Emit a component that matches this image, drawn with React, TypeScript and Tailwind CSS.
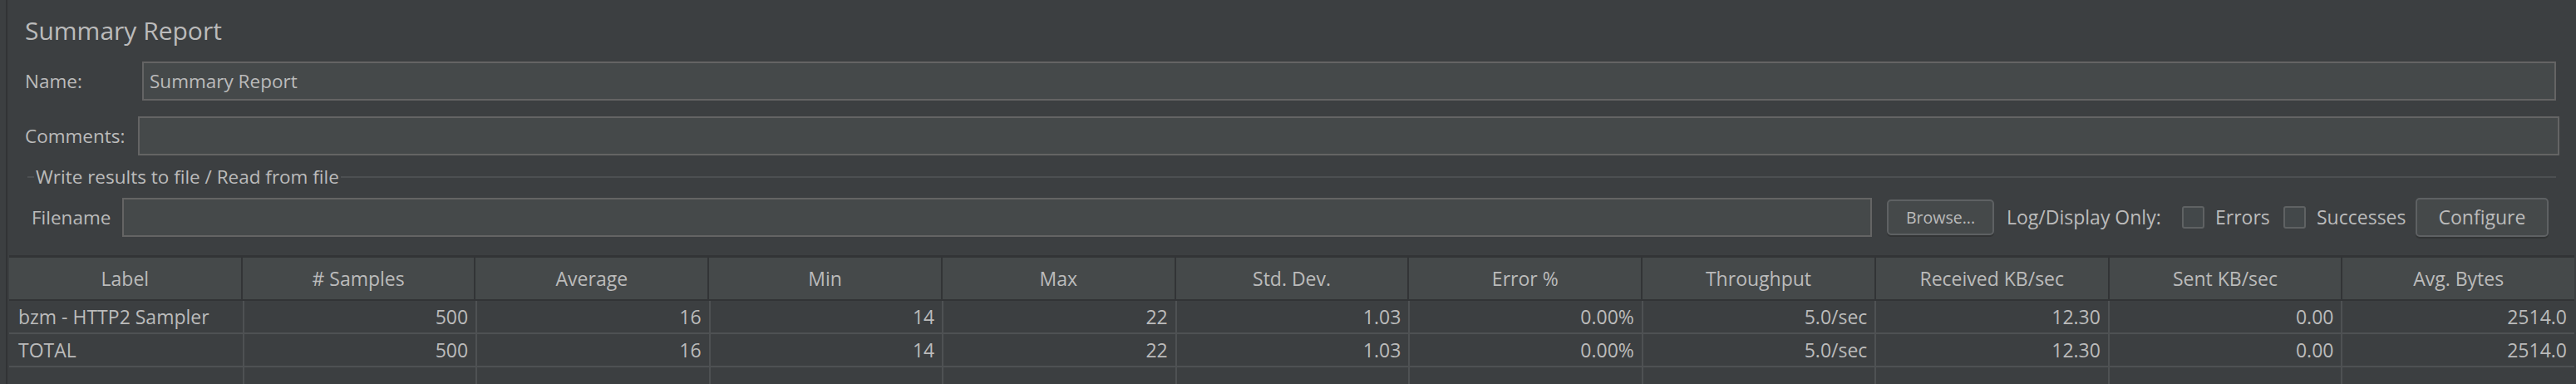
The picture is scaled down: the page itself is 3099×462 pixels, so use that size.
import React from "react";

const headers = [
  "Label",
  "# Samples",
  "Average",
  "Min",
  "Max",
  "Std. Dev.",
  "Error %",
  "Throughput",
  "Received KB/sec",
  "Sent KB/sec",
  "Avg. Bytes",
];

const rows = [
  ["bzm - HTTP2 Sampler", "500", "16", "14", "22", "1.03", "0.00%", "5.0/sec", "12.30", "0.00", "2514.0"],
  ["TOTAL", "500", "16", "14", "22", "1.03", "0.00%", "5.0/sec", "12.30", "0.00", "2514.0"],
  ["", "", "", "", "", "", "", "", "", "", ""],
];

function Checkbox() {
  return <div className="w-[27px] h-[27px] shrink-0 rounded-[3px] border-2 border-[#5f6263] bg-[#43484a]" />;
}

export default function App() {
  return (
    <div className="w-[3099px] h-[462px] overflow-hidden bg-[#3c3f41] text-[#bbbbbb] flex font-['Open_Sans',sans-serif]">
      <div className="w-[7px] shrink-0" />
      <div className="w-[2px] shrink-0 bg-[#313335]" />
      <div className="flex-1 flex flex-col min-w-0 overflow-hidden">
        {/* Title */}
        <div className="h-[74px] shrink-0 pl-[21px] pt-[17px]">
          <div className="text-[30px] leading-[40px]">Summary Report</div>
        </div>
        {/* Name */}
        <div className="h-[47px] shrink-0 flex items-stretch pr-[24px] text-[22.5px]">
          <div className="w-[162px] shrink-0 pl-[21px] flex items-center">Name:</div>
          <div className="flex-1 border-2 border-[#646464] bg-[#45494a] flex items-center pl-[7px]">
            Summary Report
          </div>
        </div>
        <div className="h-[19px] shrink-0" />
        {/* Comments */}
        <div className="h-[47px] shrink-0 flex items-stretch pr-[20px] text-[22.5px]">
          <div className="w-[157px] shrink-0 pl-[21px] flex items-center">Comments:</div>
          <div className="flex-1 border-2 border-[#646464] bg-[#45494a]" />
        </div>
        {/* Separator */}
        <div className="h-[51px] shrink-0 flex items-center pl-[24px] pr-[24px]">
          <div className="w-[8px] h-[2px] bg-[#4d5052]" />
          <div className="px-[2px] text-[22.5px] leading-[28px]">Write results to file / Read from file</div>
          <div className="flex-1 h-[2px] bg-[#4d5052]" />
        </div>
        {/* Filename row */}
        <div className="h-[47px] shrink-0 flex items-center pr-[33px] text-[22.5px]">
          <div className="w-[138px] shrink-0 pl-[29px]">Filename</div>
          <div className="flex-1 self-stretch border-2 border-[#646464] bg-[#45494a]" />
          <div className="ml-[18px] w-[129px] h-[43px] shrink-0 rounded-[5px] border-2 border-[#5e6163] bg-[#45494a] shadow-[0_2px_0_#323435] flex items-center justify-center text-[19.5px]">
            Browse...
          </div>
          <div className="ml-[15px] w-[188px] shrink-0 whitespace-nowrap text-[23px]">Log/Display Only:</div>
          <div className="ml-[23px]"><Checkbox /></div>
          <div className="ml-[13px] w-[58px] shrink-0 text-[23px]">Errors</div>
          <div className="ml-[24px]"><Checkbox /></div>
          <div className="ml-[13px] w-[105px] shrink-0 whitespace-nowrap text-[23px]">Successes</div>
          <div className="ml-[14px] w-[160px] h-[47px] shrink-0 rounded-[5px] border-2 border-[#5e6163] bg-[#45494a] shadow-[0_2px_0_#323435] flex items-center justify-center text-[23px]">
            Configure
          </div>
        </div>
        <div className="h-[22px] shrink-0" />
        {/* Table */}
        <div className="ml-[2px] mr-[2px] shrink-0 flex flex-col text-[23px]">
          <div className="h-[3px] bg-[#323436]" />
          <div className="h-[50px] flex bg-[#45494a]">
            {headers.map((h, i) => (
              <div
                key={h}
                className={
                  "flex-1 min-w-0 flex items-center justify-center whitespace-nowrap " +
                  (i < headers.length - 1 ? "border-r-2 border-[#323436]" : "")
                }
              >
                {h}
              </div>
            ))}
          </div>
          <div className="h-[2px] bg-[#323436]" />
          {rows.map((r, ri) => (
            <div key={ri} className="h-[40px] shrink-0 flex border-b-2 border-[#4e5153]">
              {r.map((c, i) => (
                <div
                  key={i}
                  className={
                    "flex-1 min-w-0 flex items-center whitespace-nowrap " +
                    (i === 0 ? "justify-start pl-[11px] " : "justify-end pr-[9px] ") +
                    (i < r.length - 1 ? "border-r-2 border-[#4e5153]" : "")
                  }
                >
                  {c}
                </div>
              ))}
            </div>
          ))}
        </div>
      </div>
    </div>
  );
}
